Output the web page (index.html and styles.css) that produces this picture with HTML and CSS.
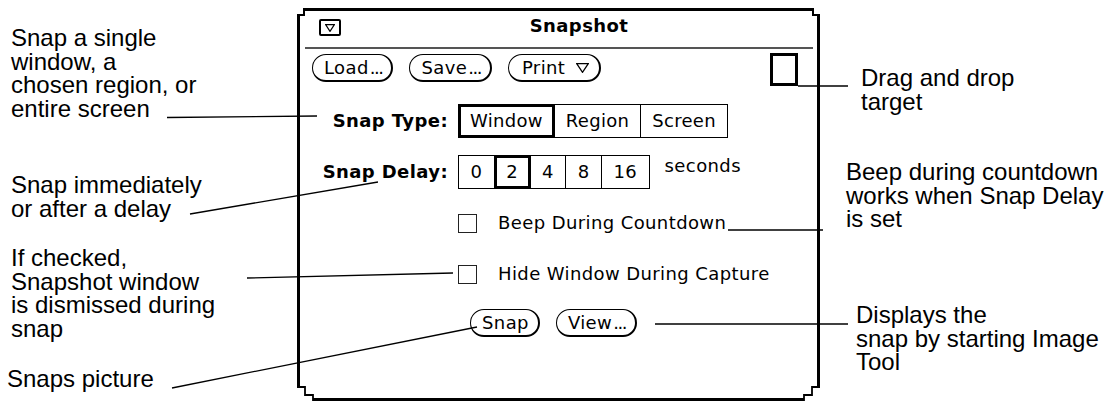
FILE: index.html
```html
<!DOCTYPE html>
<html lang="en">
<head>
    <meta charset="UTF-8">
    <meta name="viewport" content="width=device-width, initial-scale=1.0">
    <title>Snapshot</title>
    <link rel="stylesheet" href="styles.css">
</head>
<body>
    <div class="figure">
        <div class="notes notes-left">
            <p class="note note-type">Snap a single<br>window, a<br>chosen region, or<br>entire screen</p>
            <p class="note note-delay">Snap immediately<br>or after a delay</p>
            <p class="note note-hide">If checked,<br>Snapshot window<br>is dismissed during<br>snap</p>
            <p class="note note-snap">Snaps picture</p>
        </div>

        <div class="window">
            <!-- resize corners -->
            <svg class="corner corner-tl" width="9" height="9">
                <rect x="0" y="0" width="8" height="8" fill="#fff"/>
                <path d="M7 0 V7 H0" fill="none" stroke="#000" stroke-width="2"/>
            </svg>
            <svg class="corner corner-tr" width="9" height="9">
                <rect x="1" y="0" width="8" height="8" fill="#fff"/>
                <path d="M2 0 V7 H9" fill="none" stroke="#000" stroke-width="2"/>
            </svg>
            <svg class="corner corner-bl" width="17" height="15">
                <path d="M0 1 H8 V9 H16 V15 H0 Z" fill="#fff"/>
                <path d="M0 1 H8 V9 H16 V15" fill="none" stroke="#000" stroke-width="1.8"/>
            </svg>
            <svg class="corner corner-br" width="17" height="15">
                <path d="M17 1 H9 V9 H1 V15 H17 Z" fill="#fff"/>
                <path d="M17 1 H9 V9 H1 V15" fill="none" stroke="#000" stroke-width="1.8"/>
            </svg>

            <div class="titlebar">
                <span class="menu-btn">
                    <svg width="10" height="8"><polygon points="0.6,0.6 9.4,0.6 5,7.4" fill="none" stroke="#000" stroke-width="1.2"/></svg>
                </span>
                <span class="title">Snapshot</span>
            </div>
            <div class="rule"></div>

            <div class="toolbar">
                <button class="btn">Load<span class="dots">...</span></button>
                <button class="btn">Save<span class="dots">...</span></button>
                <button class="btn btn-menu">Print <svg class="tri" width="13" height="10"><polygon points="0.7,0.7 12.3,0.7 6.5,9.3" fill="none" stroke="#000" stroke-width="1.3"/></svg></button>
                <div class="drop-target"></div>
            </div>

            <div class="settings">
                <div class="label">Snap Type:</div>
                <div class="segments">
                    <div class="seg is-on">Window</div>
                    <div class="seg">Region</div>
                    <div class="seg">Screen</div>
                </div>

                <div class="label">Snap Delay:</div>
                <div class="delay">
                    <div class="segments segments-num">
                        <div class="seg">0</div>
                        <div class="seg is-on">2</div>
                        <div class="seg">4</div>
                        <div class="seg">8</div>
                        <div class="seg">16</div>
                    </div>
                    <span class="unit">seconds</span>
                </div>
            </div>

            <div class="check check-beep">
                <span class="check-box"></span>
                <span>Beep During Countdown</span>
            </div>
            <div class="check check-hide">
                <span class="check-box"></span>
                <span>Hide Window During Capture</span>
            </div>

            <div class="actions">
                <button class="btn">Snap</button>
                <button class="btn">View<span class="dots">...</span></button>
            </div>
        </div>

        <div class="notes notes-right">
            <p class="note note-drag">Drag and drop<br>target</p>
            <p class="note note-beep">Beep during countdown<br>works when Snap Delay<br>is set</p>
            <p class="note note-view">Displays the<br>snap by starting Image<br>Tool</p>
        </div>

        <!-- leader lines from the notes to the controls -->
        <svg class="leaders" width="1114" height="402">
            <g stroke="#000" stroke-width="1.3" fill="none">
                <line x1="167" y1="117.5" x2="317" y2="116"/>
                <line x1="190" y1="214" x2="378" y2="182"/>
                <line x1="247" y1="278" x2="453" y2="273"/>
                <line x1="172" y1="388" x2="477" y2="327"/>
                <line x1="798" y1="86" x2="848" y2="86"/>
                <line x1="728" y1="230" x2="823" y2="230"/>
                <line x1="655" y1="324" x2="848" y2="324"/>
            </g>
        </svg>
    </div>
</body>
</html>
```

FILE: styles.css
```css
body {
    margin: 0;
    background: #fff;
    color: #000;
}

.figure {
    position: relative;
    display: grid;
    grid-template-columns: 297px 523px 1fr;
    height: 402px;
    overflow: hidden;
}

/* callout text */
.note {
    margin: 0;
    font-family: "Liberation Sans", Arial, sans-serif;
    font-size: 24px;
    line-height: 23.5px;
}

.notes-left {
    padding-left: 11px;
}

.note-type {
    margin-top: 26px;
}

.note-delay {
    margin-top: 53px;
}

.note-hide {
    margin-top: 26px;
}

.note-snap {
    margin-top: 27px;
    margin-left: -4px;
}

.note-drag {
    margin-top: 66px;
    padding-left: 41px;
}

.note-beep {
    margin-top: 47px;
    padding-left: 26px;
}

.note-view {
    margin-top: 72.5px;
    padding-left: 36px;
}

.leaders {
    position: absolute;
    top: 0;
    left: 0;
    pointer-events: none;
}

/* the Snapshot window */
.window {
    position: relative;
    box-sizing: border-box;
    height: 393px;
    margin-top: 8px;
    border: 3px solid #000;
    font-family: "DejaVu Sans", sans-serif;
    font-size: 18px;
    line-height: 20px;
    letter-spacing: 0.4px;
}

.corner {
    position: absolute;
    display: block;
}

.corner-tl {
    left: -3px;
    top: -3px;
}

.corner-tr {
    right: -3px;
    top: -3px;
}

.corner-bl {
    left: -3px;
    bottom: -3px;
}

.corner-br {
    right: -3px;
    bottom: -3px;
}

.titlebar {
    display: flex;
    height: 36px;
    padding-left: 19px;
}

.menu-btn {
    display: flex;
    align-items: center;
    justify-content: center;
    box-sizing: border-box;
    width: 22px;
    height: 17px;
    margin-top: 8px;
    border: 2px solid #000;
    border-radius: 2px;
}

.title {
    flex: 1;
    margin-top: 4.5px;
    text-align: center;
    font-weight: bold;
}

.rule {
    height: 2px;
    margin: 0 4px 0 5px;
    background: #555;
}

.toolbar {
    display: flex;
    align-items: flex-start;
    height: 33px;
    margin-top: 4px;
    padding: 0 19px 0 12px;
}

.btn {
    box-sizing: border-box;
    height: 28px;
    margin: 1px 0 0;
    padding: 3px 9px 2px 11px;
    border: 1px solid #000;
    border-right-width: 2px;
    border-bottom-width: 2px;
    border-radius: 14px;
    background: #fff;
    color: #000;
    font: inherit;
    letter-spacing: inherit;
    line-height: 20px;
}

.toolbar .btn + .btn {
    margin-left: 16px;
}

.dots {
    letter-spacing: -1.5px;
    margin-left: 1px;
}

.btn-menu {
    padding-left: 13px;
    padding-right: 10px;
}

.tri {
    margin-left: 5px;
    vertical-align: 1px;
}

.drop-target {
    box-sizing: border-box;
    width: 28px;
    height: 33px;
    margin-left: auto;
    border: 3px solid #000;
}

.settings {
    display: grid;
    grid-template-columns: 148px auto;
    justify-content: start;
    align-items: center;
    column-gap: 10px;
    row-gap: 17px;
    margin-top: 18px;
}

.label {
    text-align: right;
    font-weight: bold;
}

.segments {
    display: flex;
    justify-self: start;
    border: 1px solid #000;
    letter-spacing: 0.3px;
}

.seg {
    box-sizing: border-box;
    height: 32px;
    padding: 6px 11px;
}

.segments-num .seg {
    padding: 6px 11.5px;
}

.seg + .seg {
    border-left: 1px solid #000;
}

.seg.is-on {
    box-shadow: inset 0 0 0 2px #000;
}

.delay {
    display: flex;
    align-items: flex-start;
}

.unit {
    margin: 1px 0 0 15px;
}

.check {
    display: flex;
    align-items: center;
    height: 20px;
    margin-left: 158px;
}

.check-box {
    box-sizing: border-box;
    width: 19px;
    height: 19px;
    margin-right: 21px;
    border: 1px solid #222;
}

.check-beep {
    margin-top: 24px;
}

.check-hide {
    margin-top: 31px;
}

.actions {
    display: flex;
    margin-top: 24px;
    padding-left: 170px;
}

.actions .btn + .btn {
    margin-left: 16px;
}
```
